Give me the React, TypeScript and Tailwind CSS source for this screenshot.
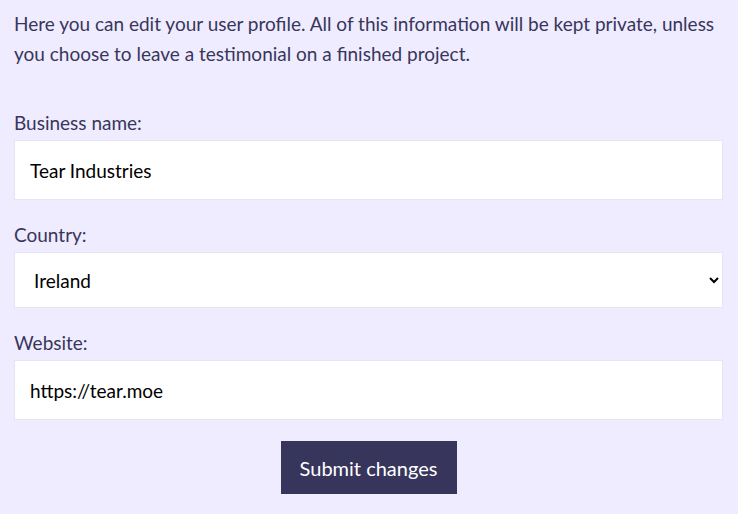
export default function App() {
  return (
    <div
      className="min-h-screen w-full bg-[#efecff] px-[14px] pt-[9px] text-[#38365a]"
      style={{ fontFamily: "Lato, 'Open Sans', sans-serif" }}
    >
      <p className="text-[19px] leading-[30px]">
        Here you can edit your user profile. All of this information will be kept private, unless
        you choose to leave a testimonial on a finished project.
      </p>

      <form className="mt-[41px] mr-[1px] flex flex-col" onSubmit={(e) => e.preventDefault()}>
        <label className="text-[19px] leading-[26px]">Business name:</label>
        <input
          defaultValue="Tear Industries"
          className="mt-[4px] h-[60px] w-full border border-[#e6e4ee] bg-white px-[15px] text-[19px] text-black outline-none"
        />

        <label className="mt-[22px] text-[19px] leading-[26px]">Country:</label>
        <select
          defaultValue="Ireland"
          className="mt-[4px] h-[56px] w-full border border-[#e6e4ee] bg-white px-[15px] text-[19px] text-black outline-none"
        >
          <option>Ireland</option>
          <option>United Kingdom</option>
          <option>United States</option>
        </select>

        <label className="mt-[22px] text-[19px] leading-[26px]">Website:</label>
        <input
          defaultValue="https://tear.moe"
          className="mt-[4px] h-[60px] w-full border border-[#e6e4ee] bg-white px-[15px] text-[19px] text-black outline-none"
        />

        <div className="mt-[21px] flex justify-center">
          <button
            type="submit"
            className="h-[53px] w-[176px] bg-[#37355c] text-[20px] text-white"
          >
            Submit changes
          </button>
        </div>
      </form>
    </div>
  );
}
